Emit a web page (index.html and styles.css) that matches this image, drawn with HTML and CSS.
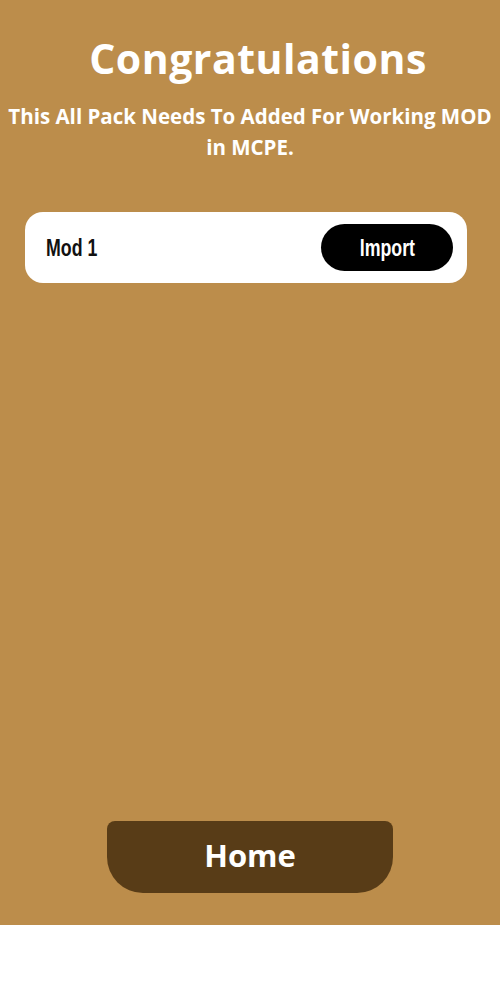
FILE: index.html
```html
<!DOCTYPE html>
<html lang="en">
<head>
<meta charset="UTF-8">
<meta name="viewport" content="width=device-width, initial-scale=1.0">
<title>Congratulations</title>
<link rel="stylesheet" href="styles.css">
</head>
<body>

<div class="screen">
    <h1 class="title">Congratulations</h1>
    <p class="subtitle">This All Pack Needs To Added For Working MOD in MCPE.</p>

    <div class="mod-list">
        <div class="mod-card">
            <span class="mod-name">Mod 1</span>
            <button class="import-button"><span class="narrow">Import</span></button>
        </div>
    </div>

    <button class="home-button">Home</button>
</div>

</body>
</html>
```

FILE: styles.css
```css
body {
    margin: 0;
    padding: 0;
    background-color: #fff;
    font-family: "Open Sans", sans-serif;
}

.screen {
    height: 925px;
    background-color: #bc8d4b;
    display: flex;
    flex-direction: column;
    align-items: center;
    box-sizing: border-box;
    padding-top: 29px;
}

.title {
    margin: 0 0 0 16px;
    color: #fff;
    font-family: "Open Sans", sans-serif;
    font-size: 41px;
    font-weight: 700;
    letter-spacing: 0.5px;
    line-height: 58px;
}

.subtitle {
    max-width: 492px;
    margin: 14px 0 0;
    color: #fff;
    font-family: "Open Sans", sans-serif;
    font-size: 20.5px;
    font-weight: 700;
    line-height: 31px;
    text-align: center;
}

.mod-list {
    width: 442px;
    margin: 49px 0 0 -8px;
}

.mod-card {
    display: flex;
    justify-content: space-between;
    align-items: center;
    height: 71px;
    padding: 0 14px 0 21px;
    box-sizing: border-box;
    background-color: #fff;
    border-radius: 18px;
}

.mod-name, .narrow {
    display: inline-block;
    font-family: "Liberation Sans", sans-serif;
    font-size: 24px;
    font-weight: bold;
    transform: scaleX(0.74);
}

.mod-name {
    color: #111;
    transform-origin: left center;
}

.import-button {
    width: 132px;
    height: 47px;
    border: none;
    border-radius: 24px;
    background-color: #000;
    color: #fff;
    padding: 0;
    cursor: pointer;
}

.home-button {
    margin-top: auto;
    margin-bottom: 32px;
    width: 286px;
    height: 72px;
    padding: 0 0 5px;
    border: none;
    border-radius: 8px 8px 36px 36px;
    background-color: #583c17;
    color: #fff;
    font-family: "Open Sans", sans-serif;
    font-size: 31px;
    font-weight: 700;
    cursor: pointer;
}
```
